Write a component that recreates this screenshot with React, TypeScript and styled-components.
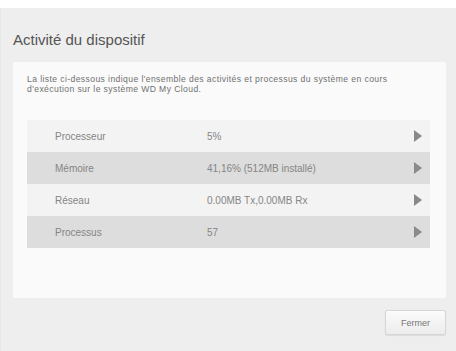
import styled, { createGlobalStyle } from "styled-components";

const GlobalStyle = createGlobalStyle`
  html, body {
    margin: 0;
    padding: 0;
    background: #ffffff;
  }
  body {
    font-family: "Liberation Sans", Arial, sans-serif;
  }
`;

/* ─── Data ─── */

const rows = [
  { label: "Processeur", value: "5%" },
  { label: "Mémoire", value: "41,16% (512MB installé)" },
  { label: "Réseau", value: "0.00MB Tx,0.00MB Rx" },
  { label: "Processus", value: "57" },
];

/* ─── Styled Components ─── */

const Dialog = styled.div`
  margin-top: 8px;
  height: 343px;
  background: #eeeeee;
  border-left: 1px solid #e6e6e6;
  display: flex;
  flex-direction: column;
  box-sizing: border-box;
`;

const Title = styled.h2`
  margin: 0;
  padding: 24px 0 0 12px;
  height: 54px;
  box-sizing: border-box;
  font-size: 15px;
  line-height: 16px;
  font-weight: normal;
  color: #555555;
`;

const Panel = styled.div`
  margin: 0 10px 0 12px;
  height: 236px;
  background: #fafafa;
  padding: 13px 16px 0 14px;
  box-sizing: border-box;
`;

const Description = styled.p`
  margin: 0 0 26px 0;
  width: 392px;
  font-size: 8.6px;
  line-height: 9.5px;
  letter-spacing: 0.4px;
  color: #707070;
`;

const Table = styled.div`
  display: flex;
  flex-direction: column;
`;

const Row = styled.div<{ $shaded: boolean }>`
  height: 32px;
  display: grid;
  grid-template-columns: 152px 1fr auto;
  align-items: center;
  padding: 0 8px 0 28px;
  background: ${(p) => (p.$shaded ? "#dddddd" : "#f3f3f3")};
  font-size: 10px;
  color: #858585;
`;

const Arrow = styled.span`
  width: 0;
  height: 0;
  border-top: 6px solid transparent;
  border-bottom: 6px solid transparent;
  border-left: 8px solid #8a8a8a;
`;

const Footer = styled.div`
  flex: 1;
  display: flex;
  justify-content: flex-end;
  align-items: flex-start;
  padding: 12px 10px 0 0;
`;

const CloseButton = styled.button`
  width: 61px;
  height: 25px;
  border: 1px solid #d6d6d6;
  border-radius: 2px;
  background: linear-gradient(#fbfbfb, #ececec);
  box-shadow: 0 1px 1px rgba(0, 0, 0, 0.08);
  font-family: "Liberation Sans", Arial, sans-serif;
  font-size: 9px;
  color: #777777;
  padding: 0;
`;

/* ─── Component ─── */

export default function App() {
  return (
    <>
      <GlobalStyle />
      <Dialog>
        <Title>Activité du dispositif</Title>
        <Panel>
          <Description>
            La liste ci-dessous indique l'ensemble des activités et processus du système en cours
            d'exécution sur le système WD My Cloud.
          </Description>
          <Table>
            {rows.map((r, i) => (
              <Row key={r.label} $shaded={i % 2 === 1}>
                <span>{r.label}</span>
                <span>{r.value}</span>
                <Arrow />
              </Row>
            ))}
          </Table>
        </Panel>
        <Footer>
          <CloseButton>Fermer</CloseButton>
        </Footer>
      </Dialog>
    </>
  );
}
